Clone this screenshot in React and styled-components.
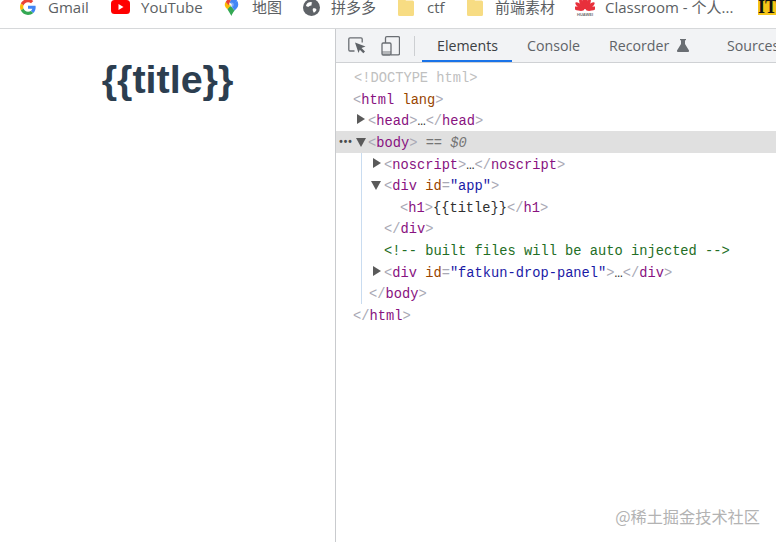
import styled, { createGlobalStyle } from "styled-components";

const GlobalStyle = createGlobalStyle`
  html, body {
    margin: 0;
    padding: 0;
    background: #fff;
    overflow: hidden;
  }
`;

const Page = styled.div`
  position: relative;
  width: 776px;
  height: 542px;
  display: flex;
  flex-direction: column;
  overflow: hidden;
  font-family: "Open Sans", "Noto Sans CJK SC", sans-serif;
`;

const BookmarkBar = styled.div`
  flex: none;
  height: 29px;
  display: flex;
  align-items: center;
  padding: 0 0 14px 20px;
  box-sizing: border-box;
  border-bottom: 1px solid #d6d8da;
  white-space: nowrap;
  overflow: hidden;
`;

const Bookmark = styled.div`
  display: flex;
  align-items: center;
  flex: none;
  width: ${({ $width }) => $width}px;
  gap: ${({ $gap }) => $gap}px;
  color: #5c5f63;
  font-size: 15px;
  line-height: 14px;
  font-family: "Open Sans", "Noto Sans CJK SC", sans-serif;
`;

const AppBadge = styled.div`
  flex: none;
  width: 18px;
  height: 15px;
  background: #f5c518;
  color: #111;
  font-family: "Liberation Serif", serif;
  font-size: 18px;
  font-weight: 700;
  line-height: 15px;
  text-align: left;
`;

const Main = styled.div`
  flex: 1;
  display: flex;
  min-height: 0;
`;

const PagePane = styled.div`
  width: 335px;
  flex: none;
  border-right: 1px solid #c9cbce;
  box-sizing: content-box;
`;

const Title = styled.h1`
  margin: 25px 0 0;
  text-align: center;
  color: #2c3e50;
  font-family: "Liberation Sans", Arial, sans-serif;
  font-size: 39.5px;
  font-weight: 700;
  line-height: 50px;
`;

const Devtools = styled.div`
  flex: 1;
  min-width: 0;
  display: flex;
  flex-direction: column;
`;

const Toolbar = styled.div`
  height: 34px;
  flex: none;
  display: flex;
  align-items: center;
  background: #f2f3f5;
  border-bottom: 1px solid #cfd1d4;
  box-sizing: border-box;
  padding-left: 12px;
  overflow: hidden;
  white-space: nowrap;
`;

const ToolIcon = styled.svg`
  flex: none;
  margin-right: ${({ $gap }) => $gap}px;
`;

const Separator = styled.div`
  width: 1px;
  height: 20px;
  flex: none;
  background: #cdcfd2;
  margin-right: 7px;
`;

const Tab = styled.div`
  flex: none;
  height: 33px;
  box-sizing: border-box;
  width: ${({ $width }) => $width}px;
  display: flex;
  align-items: center;
  gap: 8px;
  padding-left: 15px;
  font-size: 14.2px;
  color: ${({ $active }) => ($active ? "#3c4043" : "#5f6368")};
  border-bottom: 2px solid ${({ $active }) => ($active ? "#1a73e8" : "transparent")};
  padding-top: 1px;
`;

const Tree = styled.div`
  padding-top: 3px;
  font-family: "Liberation Mono", monospace;
  font-size: 13.73px;
  letter-spacing: 0;
`;

const Row = styled.div`
  position: relative;
  height: 21.64px;
  line-height: 25.6px;
  white-space: pre;
  padding-left: ${({ $indent }) => $indent}px;
  background: ${({ $selected }) => ($selected ? "#e0e0e0" : "transparent")};
`;

const Children = styled.div`
  margin-left: 25px;
  border-left: 1px solid #c9dcf0;
`;

const Arrow = styled.span`
  position: absolute;
  left: ${({ $left }) => $left}px;
  top: ${({ $down }) => ($down ? 7 : 5)}px;
  width: 0;
  height: 0;
  border-style: solid;
  border-color: transparent;
  ${({ $down }) =>
    $down
      ? "border-width: 9px 5px 0; border-top-color: #5a5a5a;"
      : "border-width: 5px 0 5px 8px; border-left-color: #5a5a5a;"}
`;

const Dots = styled.span`
  position: absolute;
  left: 2px;
  top: -1px;
  color: #4a4a4a;
  font-size: 10px;
  font-weight: 700;
  letter-spacing: -1.5px;
`;

const Bracket = styled.span`
  color: #a9a9b5;
`;

const Tag = styled.span`
  color: #881280;
`;

const Attr = styled.span`
  color: #994500;
`;

const Val = styled.span`
  color: #1a1aa6;
`;

const Plain = styled.span`
  color: #303030;
`;

const Comment = styled.span`
  color: #236e25;
`;

const Doctype = styled.span`
  color: #c0c0c0;
`;

const Ref = styled.span`
  color: #757575;
  font-style: italic;
`;

const Watermark = styled.div`
  position: absolute;
  right: 16px;
  bottom: 14px;
  font-family: "Noto Sans CJK SC", sans-serif;
  font-size: 16.2px;
  line-height: 24px;
  color: #b3b3b3;
`;

function GoogleIcon() {
  return (
    <svg width="16" height="16" viewBox="0 0 48 48">
      <path fill="#ea4335" d="M24 9.500c3.500 0 6.700 1.300 9.100 3.500l6.800-6.800C35.800 2.400 30.300 0 24 0 14.600 0 6.500 5.400 2.600 13.200l7.900 6.100C12.400 13.700 17.700 9.500 24 9.500z" />
      <path fill="#4285f4" d="M47 24.500c0-1.600-.2-3.100-.4-4.500H24v9h12.900c-.6 3-2.200 5.500-4.700 7.200l7.700 6c4.500-4.200 7.100-10.300 7.100-17.700z" />
      <path fill="#fbbc05" d="M10.500 28.700c-.5-1.500-.8-3-.8-4.700s.3-3.200.8-4.700l-7.900-6.100C.9 16.500 0 20.100 0 24s.9 7.500 2.600 10.800l7.900-6.100z" />
      <path fill="#34a853" d="M24 48c6.500 0 11.900-2.100 15.900-5.800l-7.700-6c-2.200 1.400-4.900 2.300-8.200 2.300-6.300 0-11.600-4.200-13.500-9.800l-7.900 6.100C6.500 42.600 14.600 48 24 48z" />
    </svg>
  );
}

function YoutubeIcon() {
  return (
    <svg width="19" height="14" viewBox="0 0 19 14">
      <rect width="19" height="14" rx="3.500" fill="#f00" />
      <path d="M7.500 4l5 3-5 3z" fill="#fff" />
    </svg>
  );
}

function MapsIcon() {
  return (
    <svg width="15" height="18" viewBox="0 0 15 20">
      <path fill="#34a853" d="M3 12.500l4.500 7.500c.5-2 2-4 3.500-6L6 8z" />
      <path fill="#fbbc04" d="M1 4.500C.3 5.500 0 6.500 0 7.500c0 2 1.500 3.700 3 5L7 8z" />
      <path fill="#4285f4" d="M7.500 0C10 0 12.300 1.100 13.700 3L9 8.500 5.500 5z" />
      <path fill="#ea4335" d="M1 4.500C2.300 1.800 4.800 0 7.500 0v.1L5.500 5l-1 3z" />
      <path fill="#4285f4" d="M13.700 3c.8 1.200 1.300 2.800 1.300 4.500 0 2.700-2.300 4.500-4 6.500L7 8.800z" />
      <circle cx="7.500" cy="7.500" r="2.600" fill="#fff" opacity="0.35" />
    </svg>
  );
}

function GlobeIcon() {
  return (
    <svg width="17" height="17" viewBox="0 0 17 17">
      <circle cx="8.500" cy="8.500" r="8.500" fill="#5f6368" />
      <path fill="#fff" d="M5.500 3.500c1.500-.8 3-.8 3.800.3-.8.5-1 1.400-.6 2.400-.9.700-2.200.4-2.700 1.300-.5.800-2.200.1-3-.7.300-1.400 1.300-2.700 2.500-3.300zM10 9.500c1.300-.4 3 .2 3.500 1.200-.4 1.300-1.500 2.500-2.700 3-.5-.9-1.700-2.800-.8-4.200z" />
    </svg>
  );
}

function FolderIcon() {
  return (
    <svg width="16" height="17" viewBox="0 0 16 17">
      <path fill="#f7dc83" d="M1.500 0h5L8 1.500h6.500A1.500 1.500 0 0 1 16 3v12.500a1.500 1.500 0 0 1-1.500 1.500h-13A1.500 1.500 0 0 1 0 15.500v-14A1.500 1.500 0 0 1 1.500 0z" />
    </svg>
  );
}

function HuaweiIcon() {
  const petals = [-78, -52, -26, -7, 7, 26, 52, 78];
  return (
    <svg width="20" height="18" viewBox="0 0 20 18">
      {petals.map((a) => (
        <ellipse key={a} cx="10" cy="5.500" rx="2" ry="5.500" fill="#e8303c" transform={`rotate(${a} 10 12)`} />
      ))}
      <text x="10" y="17.500" textAnchor="middle" fontSize="4" fontWeight="700" fill="#6f6f6f" fontFamily="Liberation Sans">HUAWEI</text>
    </svg>
  );
}

function InspectIcon() {
  return (
    <ToolIcon $gap={15} width="18" height="17" viewBox="0 0 18 17" fill="none">
      <path d="M6.500 14H2a1.200 1.200 0 0 1-1.200-1.200V2A1.200 1.200 0 0 1 2 .8h11A1.200 1.200 0 0 1 14.200 2v3.500" stroke="#6a6e73" strokeWidth="1.300" />
      <path d="M7 5.500l10.500 4-4 1.500 3.500 3.500-1.700 1.700-3.500-3.500L10.500 16z" fill="#5f6368" />
    </ToolIcon>
  );
}

function DeviceIcon() {
  return (
    <ToolIcon $gap={14} width="19" height="20" viewBox="0 0 19 20" fill="none">
      <path d="M4.500 7V2A1.300 1.300 0 0 1 5.800.7h11.400A1.300 1.300 0 0 1 18.500 2v15.500a1.300 1.300 0 0 1-1.300 1.300H10" stroke="#6a6e73" strokeWidth="1.300" />
      <rect x="1" y="7" width="9" height="12" rx="1.200" stroke="#6a6e73" strokeWidth="1.300" />
      <rect x="1" y="15" width="9" height="4" fill="#6a6e73" opacity="0.45" />
    </ToolIcon>
  );
}

function FlaskIcon() {
  return (
    <svg width="12" height="13" viewBox="0 0 12 13">
      <path fill="#6a6e73" d="M3 0h6v1.300H8V5l4 6.500c.4.800 0 1.500-.9 1.500H.9C0 13-.4 12.300 0 11.500L4 5V1.300H3z" />
    </svg>
  );
}

export default function App() {
  return (
    <Page>
      <GlobalStyle />
      <BookmarkBar>
        <Bookmark $width={91} $gap={12}><GoogleIcon />Gmail</Bookmark>
        <Bookmark $width={113} $gap={11}><YoutubeIcon />YouTube</Bookmark>
        <Bookmark $width={79} $gap={13}><MapsIcon />地图</Bookmark>
        <Bookmark $width={95} $gap={11}><GlobeIcon />拼多多</Bookmark>
        <Bookmark $width={69} $gap={13}><FolderIcon />ctf</Bookmark>
        <Bookmark $width={108} $gap={12}><FolderIcon />前端素材</Bookmark>
        <Bookmark $width={183} $gap={10}><HuaweiIcon />Classroom - 个人...</Bookmark>
        <AppBadge>IT</AppBadge>
      </BookmarkBar>
      <Main>
        <PagePane>
          <Title>{"{{title}}"}</Title>
        </PagePane>
        <Devtools>
          <Toolbar>
            <InspectIcon />
            <DeviceIcon />
            <Separator />
            <Tab $width={90} $active>Elements</Tab>
            <Tab $width={82}>Console</Tab>
            <Tab $width={118}>Recorder <FlaskIcon /></Tab>
            <Tab $width={80}>Sources</Tab>
          </Toolbar>
          <Tree>
            <Row $indent={18}><Doctype>{"<!DOCTYPE html>"}</Doctype></Row>
            <Row $indent={17}>
              <Bracket>&lt;</Bracket><Tag>html</Tag> <Attr>lang</Attr><Bracket>&gt;</Bracket>
            </Row>
            <Row $indent={32}>
              <Arrow $left={21} />
              <Bracket>&lt;</Bracket><Tag>head</Tag><Bracket>&gt;</Bracket><Plain>…</Plain><Bracket>&lt;/</Bracket><Tag>head</Tag><Bracket>&gt;</Bracket>
            </Row>
            <Row $indent={32} $selected>
              <Dots>•••</Dots>
              <Arrow $left={20} $down />
              <Bracket>&lt;</Bracket><Tag>body</Tag><Bracket>&gt;</Bracket> <Ref>== $0</Ref>
            </Row>
            <Children>
              <Row $indent={22}>
                <Arrow $left={11} />
                <Bracket>&lt;</Bracket><Tag>noscript</Tag><Bracket>&gt;</Bracket><Plain>…</Plain><Bracket>&lt;/</Bracket><Tag>noscript</Tag><Bracket>&gt;</Bracket>
              </Row>
              <Row $indent={22}>
                <Arrow $left={9} $down />
                <Bracket>&lt;</Bracket><Tag>div</Tag> <Attr>id</Attr><Bracket>=</Bracket><Val>"app"</Val><Bracket>&gt;</Bracket>
              </Row>
              <Row $indent={38}>
                <Bracket>&lt;</Bracket><Tag>h1</Tag><Bracket>&gt;</Bracket><Plain>{"{{title}}"}</Plain><Bracket>&lt;/</Bracket><Tag>h1</Tag><Bracket>&gt;</Bracket>
              </Row>
              <Row $indent={22}>
                <Bracket>&lt;/</Bracket><Tag>div</Tag><Bracket>&gt;</Bracket>
              </Row>
              <Row $indent={22}><Comment>{"<!-- built files will be auto injected -->"}</Comment></Row>
              <Row $indent={22}>
                <Arrow $left={11} />
                <Bracket>&lt;</Bracket><Tag>div</Tag> <Attr>id</Attr><Bracket>=</Bracket><Val>"fatkun-drop-panel"</Val><Bracket>&gt;</Bracket><Plain>…</Plain><Bracket>&lt;/</Bracket><Tag>div</Tag><Bracket>&gt;</Bracket>
              </Row>
              <Row $indent={7}>
                <Bracket>&lt;/</Bracket><Tag>body</Tag><Bracket>&gt;</Bracket>
              </Row>
            </Children>
            <Row $indent={17}>
              <Bracket>&lt;/</Bracket><Tag>html</Tag><Bracket>&gt;</Bracket>
            </Row>
          </Tree>
        </Devtools>
      </Main>
      <Watermark>@稀土掘金技术社区</Watermark>
    </Page>
  );
}
